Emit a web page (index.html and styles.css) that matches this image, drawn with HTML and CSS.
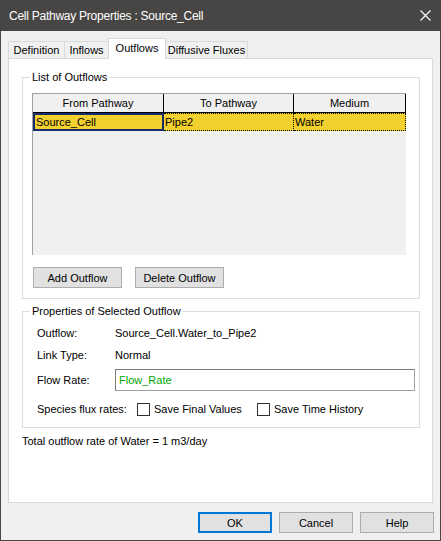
FILE: index.html
```html
<!DOCTYPE html>
<html>
<head>
<meta charset="utf-8">
<title>Cell Pathway Properties</title>
<link rel="stylesheet" href="styles.css">
</head>
<body>
<div class="window">
  <div class="titlebar">
    <span class="title">Cell Pathway Properties : Source_Cell</span>
    <svg class="close" width="11" height="11" viewBox="0 0 11 11"><path d="M0.5 0.5 L10.5 10.5 M10.5 0.5 L0.5 10.5" stroke="#ffffff" stroke-width="1.1" fill="none"/></svg>
  </div>
  <div class="body">
    <div class="tabs">
      <div class="tab tab-def">Definition</div>
      <div class="tab tab-in">Inflows</div>
      <div class="tab tab-out active">Outflows</div>
      <div class="tab tab-diff">Diffusive Fluxes</div>
    </div>
    <div class="panel">
      <fieldset class="group list-group">
        <legend>List of Outflows</legend>
        <div class="grid">
          <div class="grid-head">
            <div class="hcell c1">From Pathway</div>
            <div class="hcell c2">To Pathway</div>
            <div class="hcell c3">Medium</div>
          </div>
          <div class="grid-row">
            <div class="cell c1 current">Source_Cell</div>
            <div class="cell c2">Pipe2</div>
            <div class="cell c3">Water</div>
          </div>
        </div>
        <div class="group-actions">
          <button class="btn btn-wide">Add Outflow</button>
          <button class="btn btn-wide">Delete Outflow</button>
        </div>
      </fieldset>
      <fieldset class="group props-group">
        <legend>Properties of Selected Outflow</legend>
        <div class="prop-row">
          <span class="prop-label">Outflow:</span>
          <span>Source_Cell.Water_to_Pipe2</span>
        </div>
        <div class="prop-row row-link">
          <span class="prop-label">Link Type:</span>
          <span>Normal</span>
        </div>
        <div class="prop-row row-rate">
          <span class="prop-label">Flow Rate:</span>
          <div class="textbox">Flow_Rate</div>
        </div>
        <div class="prop-row row-species">
          <span class="species-label">Species flux rates:</span>
          <label class="check check-first"><span class="box"></span>Save Final Values</label>
          <label class="check"><span class="box"></span>Save Time History</label>
        </div>
      </fieldset>
      <div class="total">Total outflow rate of Water = 1 m3/day</div>
    </div>
    <div class="footer">
      <button class="btn btn-dlg btn-default">OK</button>
      <button class="btn btn-dlg">Cancel</button>
      <button class="btn btn-dlg">Help</button>
    </div>
  </div>
</div>
</body>
</html>
```

FILE: styles.css
```css
html, body {
  margin: 0;
  padding: 0;
  background: #f0f0f0;
}
body {
  font-family: "Liberation Sans", Arial, sans-serif;
  font-size: 11px;
  color: #000;
}
.window {
  width: 441px;
  height: 541px;
  display: flex;
  flex-direction: column;
  background: #f0f0f0;
}
.titlebar {
  height: 31px;
  flex: none;
  background: #484644;
  color: #fff;
  display: flex;
  align-items: center;
  justify-content: space-between;
  padding: 0 10px 0 9px;
}
.title {
  font-family: "Liberation Sans", Arial, sans-serif;
  font-size: 12px;
  letter-spacing: -0.25px;
}
.close {
  display: block;
}
.body {
  flex: 1;
  border: 1px solid #4a4846;
  border-top: 0;
  padding: 7px 6px 0 7px;
  display: flex;
  flex-direction: column;
}
.tabs {
  display: flex;
  align-items: flex-end;
  height: 20px;
}
.tab {
  box-sizing: border-box;
  height: 17px;
  border: 1px solid #d9d9d9;
  border-bottom: 0;
  margin-right: -1px;
  text-align: center;
  line-height: 16px;
  background: #f0f0f0;
}
.tab.active {
  height: 21px;
  margin-bottom: -1px;
  line-height: 18px;
  background: #fff;
  position: relative;
  z-index: 1;
}
.tab-def { width: 57px; }
.tab-in { width: 45px; }
.tab-out { width: 58px; }
.tab-diff { width: 83px; }
.panel {
  box-sizing: border-box;
  width: 425px;
  height: 445px;
  background: #fff;
  border: 1px solid #d9d9d9;
  padding: 12px 12px 0 13px;
}
.group {
  margin: 0;
  min-width: 0;
  border: 1px solid #dcdcdc;
}
.group legend {
  padding: 0 2px;
  margin-left: -2px;
  line-height: 13px;
}
.list-group {
  padding: 9px 0 10px 9px;
}
.grid {
  box-sizing: border-box;
  width: 374px;
  height: 162px;
  background: #f0f0f0;
  border-left: 1px solid #a0a0a0;
  border-top: 1px solid #a0a0a0;
}
.grid-head {
  display: flex;
  height: 19px;
}
.hcell {
  box-sizing: border-box;
  border-right: 1px solid #000;
  border-bottom: 1px solid #000;
  text-align: center;
  line-height: 18px;
  background: #f0f0f0;
}
.c1 { width: 131px; }
.c2 { width: 130px; }
.c3 { width: 112px; }
.grid-row {
  display: flex;
  height: 18px;
  background: #f2d12e;
}
.cell {
  box-sizing: border-box;
  height: 18px;
  line-height: 16px;
  padding-left: 1px;
  border-top: 1px dotted #000;
  border-bottom: 1px dotted #000;
  border-right: 1px dotted #000;
}
.cell.current {
  border: 2px solid #1a2b6a;
  line-height: 14px;
  padding-left: 1px;
}
.group-actions {
  display: flex;
  gap: 13px;
  margin: 12px 0 0 1px;
}
.btn {
  font: inherit;
  color: #000;
  box-sizing: border-box;
  height: 21px;
  padding: 0;
  background: #e1e1e1;
  border: 1px solid #adadad;
}
.btn-wide { width: 89px; }
.props-group {
  margin-top: 6px;
  padding: 6px 4px 9px 9px;
}
.prop-row {
  display: flex;
  align-items: center;
  height: 18px;
  padding-left: 5px;
}
.row-link { margin-top: 4px; }
.row-rate {
  margin-top: 5px;
  height: 22px;
}
.row-species { margin-top: 9px; }
.prop-label {
  width: 78px;
  flex: none;
}
.textbox {
  flex: 1;
  box-sizing: border-box;
  height: 22px;
  background: #fff;
  border: 1px solid #a0a0a0;
  border-top-color: #7a7a7a;
  border-left-color: #7a7a7a;
  color: #00a800;
  padding-left: 3px;
  display: flex;
  align-items: center;
}
.species-label {
  width: 100px;
  flex: none;
}
.check {
  display: flex;
  align-items: center;
}
.check-first { width: 120px; }
.box {
  box-sizing: border-box;
  width: 13px;
  height: 13px;
  border: 1px solid #333;
  background: #fff;
  margin-right: 4px;
}
.total {
  margin-top: 7px;
  line-height: 13px;
}
.footer {
  display: flex;
  justify-content: flex-end;
  gap: 7px;
  margin-top: 9px;
}
.btn-dlg { width: 74px; }
.btn-default {
  border: 2px solid #0078d7;
}
```
